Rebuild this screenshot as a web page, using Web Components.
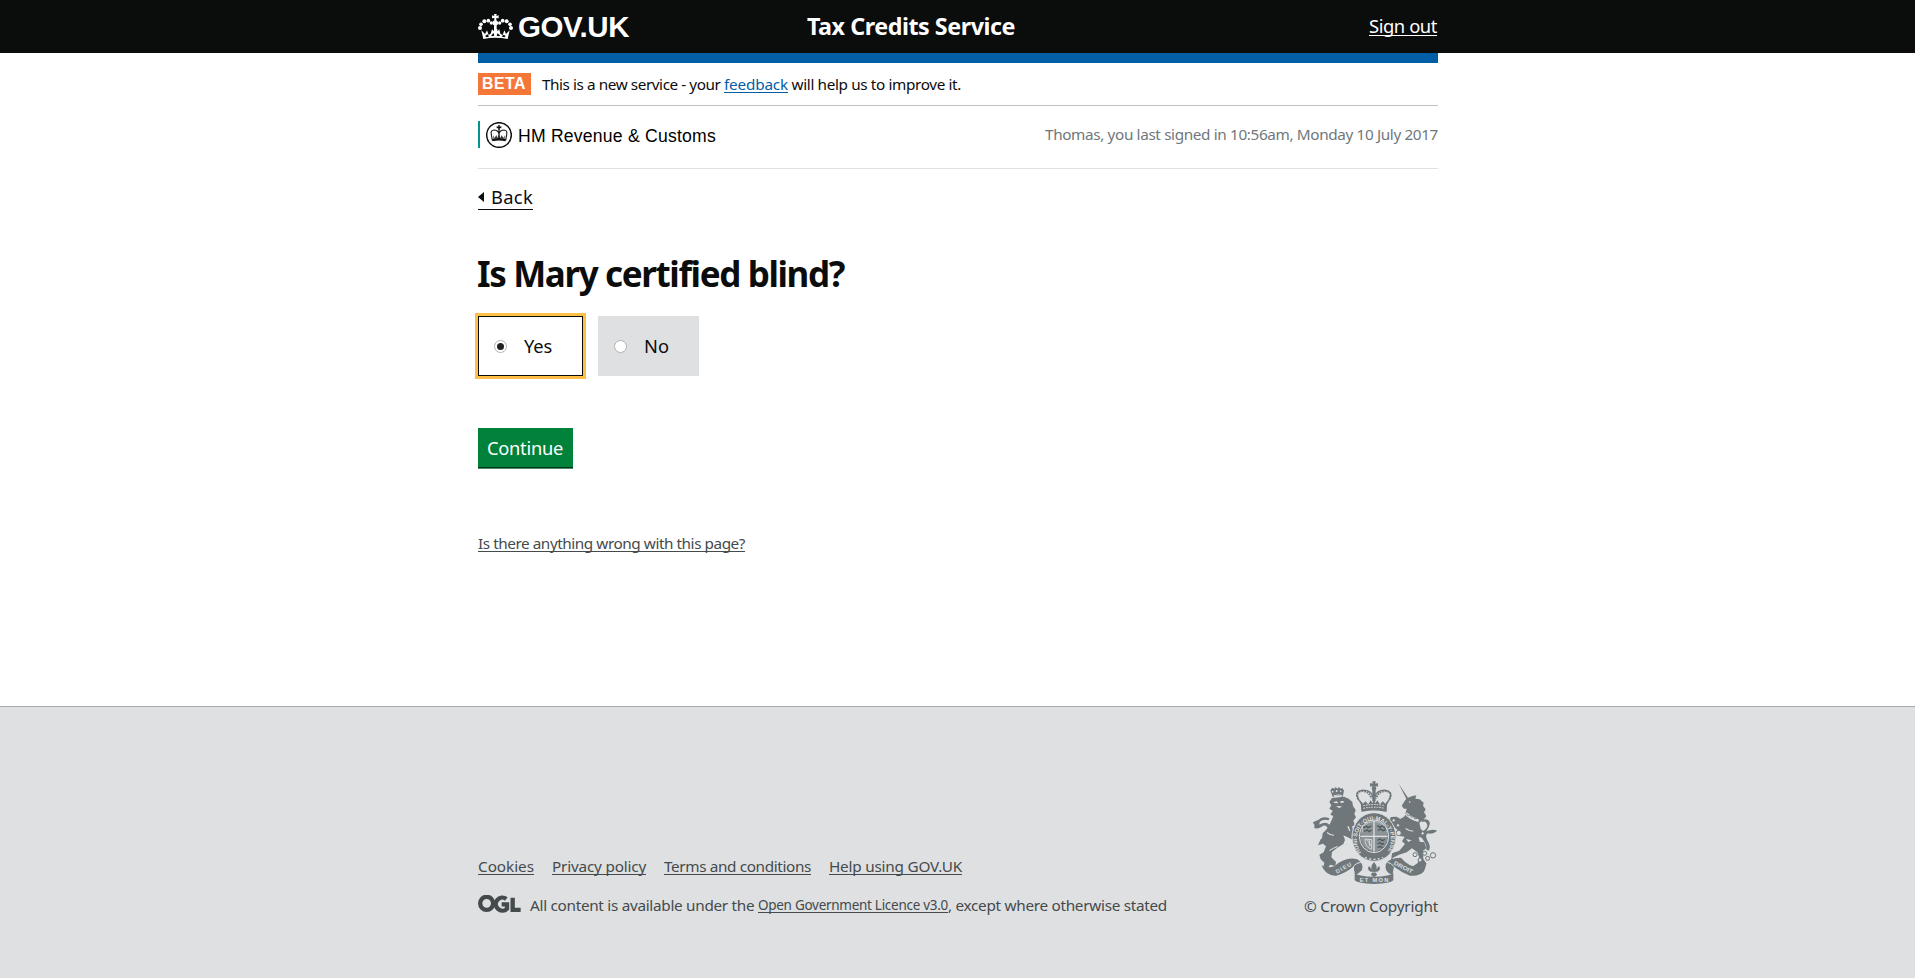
<!DOCTYPE html>
<html lang="en">
<head>
<meta charset="utf-8">
<title>Is Mary certified blind? - Tax Credits Service</title>
<style>
html,body{margin:0;padding:0}
body{background:#fff;color:#0b0c0c;font-family:"Noto Sans","Open Sans",sans-serif;font-size:15.3px;line-height:20px;overflow:hidden}
</style>
</head>
<body>
<tax-page></tax-page>
<script>
const define = (name, html, init) => customElements.define(name, class extends HTMLElement {
  connectedCallback() {
    if (this.shadowRoot) return;
    this.attachShadow({mode: "open"}).innerHTML = html;
    if (init) init(this);
  }
});

/* A run of text tracked so that it fills a set measure, given in "w". */
define("fit-text", `<style>
:host{display:inline-block;white-space:pre}
:host([u]) span{text-decoration:underline;text-decoration-thickness:1px;text-underline-offset:2px;text-decoration-skip-ink:none}
span{display:inline-block}
</style><span><slot></slot></span>`, el => {
  const s = el.shadowRoot.querySelector("span"), w = +el.getAttribute("w");
  const n = el.textContent.length;
  s.style.letterSpacing = ((w - s.getBoundingClientRect().width) / n) + "px";
  el.style.width = w + "px";
});

define("page-width", `<style>:host{display:block;width:960px;margin:0 auto;padding-left:1px}</style><slot></slot>`);

define("gov-crown", `<style>:host{display:block;width:35px;height:26px}svg{display:block}</style>
<svg width="35" height="26" viewBox="39 39 105 78" fill="#fff">
<path d="M49 88L55 114Q91 107 128 114L134 88L123 99L118 88L113 102L106 98L103 85L97 91L97 84H87V91L81 85L77 98L71 102L66 88L60 99Z"/>
<g fill="#0b0c0c"><path d="M61 104l7-4 4 7-9 2zM79 103l7-7 2 8-8 2zM97 97l8 6-2 3-8-2zM114 101l8 3-3 5-8-2z"/></g>
<circle cx="45" cy="81" r="6"/><circle cx="48" cy="70" r="5.5"/><circle cx="58" cy="61" r="6"/><circle cx="70" cy="59" r="5.5"/><circle cx="79" cy="66" r="5"/>
<circle cx="138" cy="81" r="6"/><circle cx="135" cy="70" r="5.5"/><circle cx="125" cy="61" r="6"/><circle cx="113" cy="59" r="5.5"/><circle cx="104" cy="66" r="5"/>
<circle cx="91" cy="66" r="8"/><path d="M87 39h8l-1 6 7-2v9l-7-1v13h-6V51l-7 1v-9l7 2z"/><path d="M87 73h8v14h-8z"/></svg>`);

define("site-header", `<style>
:host{display:block;height:53px;background:#0b0c0c;color:#fff}
.bar{display:grid;grid-template-columns:329px 1fr auto;align-items:center;height:53px}
.logo{display:flex;align-items:center;gap:5px}
.logo fit-text{font:700 29.5px/36px "Liberation Sans",Arial,sans-serif;padding-top:1px}
.title{font-size:23.3px;font-weight:700;line-height:30px;padding-bottom:2px}
.out{font-size:18.4px;line-height:24px;padding-right:1px;padding-bottom:1px}
</style><page-width><div class="bar"><div class="logo"><gov-crown></gov-crown><fit-text w="111">GOV.UK</fit-text></div>
<fit-text class="title" w="208">Tax Credits Service</fit-text><fit-text class="out" u w="68">Sign out</fit-text></div></page-width>`);

define("phase-banner", `<style>
:host{display:flex;align-items:center;height:42px;border-top:10px solid #005ea5;border-bottom:1px solid #bfc1c3}
.tag{background:#f47738;color:#fff;font:700 15.8px/22px "Liberation Sans",Arial,sans-serif;width:49px;padding-left:4px;margin-right:11px}
.link{color:#005ea5}
</style><div class="tag"><fit-text w="44">BETA</fit-text></div><fit-text w="182">This is a new service - your </fit-text><fit-text class="link" u w="64">feedback</fit-text><fit-text w="173"> will help us to improve it.</fit-text>`);

define("hmrc-logo", `<style>
:host{display:flex;align-items:center;border-left:2px solid #009390;height:27px;padding-left:6px;gap:6px;color:#000}
svg{display:block}fit-text{font:17.6px/22px "Liberation Sans",Arial,sans-serif;padding-top:2px}
</style><svg width="26" height="26" viewBox="63 66 78 78">
<circle cx="102" cy="105" r="37" fill="#fff" stroke="#111" stroke-width="4.5"/>
<g fill="none" stroke="#222" stroke-width="3.5"><path d="M82 121L79 104Q76 91 87 90Q99 90 102 102Q105 90 117 90Q128 91 125 104L122 121M102 82V118"/></g>
<path d="M82 124V117Q102 111 122 117V124Q102 119 82 124ZM99 76h6l-1 4 5-1v6l-5-1v5h-4v-5l-5 1v-6l5 1z" fill="#111"/>
<path d="M84 106l5 8 5-9 3 9 5-12 5 12 3-9 5 9 5-8-2 11Q102 111 86 117Z" fill="#333"/></svg><fit-text w="198">HM Revenue &amp; Customs</fit-text>`);

define("account-bar", `<style>
:host{display:flex;justify-content:space-between;align-items:center;height:57px;padding-bottom:5px;border-bottom:1px solid #dee0e2;color:#6f777b}
.who{padding-bottom:2px}
</style><hmrc-logo></hmrc-logo><fit-text class="who" w="393">Thomas, you last signed in 10:56am, Monday 10 July 2017</fit-text>`);

define("back-link", `<style>
:host{display:flex;width:55px;height:22px;align-items:center;gap:7px;margin-top:18px;border-bottom:1px solid #0b0c0c;font-size:18.3px;line-height:22px}
i{border:5px solid transparent;border-left:0;border-right:6px solid #0b0c0c;margin-bottom:2px}
fit-text{padding-bottom:2px}
</style><i></i><fit-text w="42">Back</fit-text>`);

define("block-radio", `<style>
:host{display:flex;align-items:center;box-sizing:border-box;height:60px;width:101px;background:#dee0e2;padding-left:16px;gap:17px;font-size:18.3px;line-height:24px}
:host([checked]){width:105px;background:#fff;border:1px solid #0b0c0c;outline:3px solid #ffbf47;padding-left:15px}
i{width:11px;height:11px;border:1px solid #b2b2b2;border-radius:50%;background:#fff;display:flex;align-items:center;justify-content:center}
:host([checked]) i::after{content:"";width:7px;height:7px;border-radius:50%;background:#222}
slot{display:block}
</style><i></i><slot></slot>`);

define("question-form", `<style>
:host{display:block}
h1{margin:43px 0 22px -1px;font-size:35px;line-height:41px;height:41px;font-weight:700}
.opts{display:flex;gap:15px}
button{display:block;appearance:none;border:0;margin:52px 0 66px;padding:1px 0 0 9px;width:95px;height:39px;background:#00823b;color:#fff;font:18.3px/38px "Noto Sans",sans-serif;text-align:left;box-shadow:0 1px 0 #003618,0 2px 0 #4d8a65}
.help{color:#454a4c;display:block}
</style><h1><fit-text w="367">Is Mary certified blind?</fit-text></h1>
<div class="opts"><block-radio checked><fit-text w="28">Yes</fit-text></block-radio><block-radio><fit-text w="25">No</fit-text></block-radio></div>
<button><fit-text w="76">Continue</fit-text></button><fit-text class="help" u w="267">Is there anything wrong with this page?</fit-text>`);

define("royal-arms", `<style>:host{display:block;width:125px;height:104px}svg{display:block}text{font:700 17px "Liberation Sans",Arial,sans-serif;fill:#dee0e2}</style>
<svg width="125" height="104" viewBox="69 33 375 312" fill="#6f777b">
<g id="lion"><path d="M126 84L162 80L176 86L187 96L189 108L197 120L193 132L198 142L190 152L194 164L186 170L190 181L203 192L208 203L198 206L203 214L192 217L184 207L170 200L160 196L165 210L160 222L142 233L126 246L124 262L138 276L136 288L120 284L116 292L100 290L103 278L92 268L88 254L101 247L108 229L100 222L96 204L98 190L108 180L116 170L124 152L130 138L121 134L128 122L118 116L124 106L118 96Z"/>
<path d="M99 221L84 226L92 208Q116 192 114 176Q108 161 95 170Q77 180 72 172Q77 166 68 157L86 149Q99 137 118 145L116 151Q100 146 89 156L88 164Q106 153 119 164Q128 183 112 204Z"/>
<path d="M121 61l7-8 5 3 4-5 5 5 5-5 4 5 6-2 5 8-4 18Q142 74 128 81Z"/><g fill="#dee0e2"><circle cx="128" cy="65" r="2.5"/><circle cx="140" cy="63" r="3"/><circle cx="152" cy="64" r="2.5"/><path d="M130 96l11-2 4 6-12-1zM150 94l10-1 3 4-10 3zM138 108l18 1-8 6zM131 76q14-5 25-1v3q-14-3-25 1zM176 168l5 14-3 2-6-14zM118 240q13-8 24-12l1 3q-13 4-24 12zM112 186q8 8 20 8v3q-14 0-22-8z"/></g></g>
<g id="unicorn"><path d="M326 41L354 83L365 79L379 76L376 86L389 88L401 98L399 107L407 118L402 127L409 138L401 149L388 158L392 176L405 190L400 204L386 201L389 215L403 217L409 235L399 242L400 267L410 281L403 290L390 295L367 290L383 279L388 264L382 247L366 235L350 247L327 254L309 263L303 273L306 250L328 242L345 222L336 214L344 200L329 198L323 181L307 165L299 153L302 141L320 140L331 147L344 139L350 116L342 116L335 107L344 93L349 86Z"/>
<path d="M401 212Q387 194 398 184Q413 175 412 165Q407 150 396 157L397 150Q413 144 419 157Q421 167 409 184Q426 176 442 182Q428 194 414 190Q403 195 413 213Q423 227 417 242L409 239Q411 225 401 212Z"/>
<g fill="#dee0e2"><circle cx="359" cy="96" r="2.5"/><path d="M349 127q14 12 38 22l-2 7q-26-8-40-22z"/><path d="M348 174q10 8 22 8l-1 3q-14-1-23-8zM348 207l17 4-10 5z"/></g>
<g fill="#dee0e2" stroke="#6f777b" stroke-width="3"><circle cx="375" cy="254" r="6"/><circle cx="390" cy="270" r="6"/><circle cx="404" cy="250" r="6"/><circle cx="413" cy="265" r="6"/><circle cx="429" cy="256" r="8"/><circle cx="398" cy="190" r="5"/><circle cx="326" cy="189" r="8"/><circle cx="311" cy="151" r="5"/><circle cx="324" cy="166" r="5"/></g>
<path d="M349 130l5 8 6-4 4 8 7-3 3 8 7-2" fill="none" stroke="#6f777b" stroke-width="2.5"/></g>
<g id="crown"><path d="M215 102L208 92Q190 66 215 61Q242 59 249 80H254Q262 59 287 61Q312 66 296 92L289 102L288 123Q251 116 216 123Z" fill="none" stroke="#6f777b" stroke-width="4"/>
<path d="M205 88Q195 65 217 63Q238 64 245 86M298 88Q309 65 286 63Q265 64 258 86" fill="none" stroke="#6f777b" stroke-width="6" stroke-dasharray="5 3"/>
<path d="M216 123L210 91L219 101L226 94L235 103L242 91L248 100L251 85L256 100L262 91L270 103L278 94L286 101L294 91L288 123Q251 116 216 123Z"/><path d="M247 34h10l-1 7 8-2v11l-8-2 3 7-2 6h-10l-2-6 3-7-8 2V39l8 2zM247 61h10v33h-10z"/>
<path d="M220 107q32-7 64 0M220 115q32-7 64 0" stroke="#dee0e2" stroke-width="3" fill="none" stroke-dasharray="5 3"/></g>
<g id="shield"><ellipse cx="252" cy="201" rx="66" ry="73" stroke="#dee0e2" stroke-width="3"/><ellipse cx="252" cy="199" rx="44" ry="49" fill="none" stroke="#dee0e2" stroke-width="3"/><ellipse cx="252" cy="199" rx="40" ry="45" fill="#8b9396"/>
<path d="M252 153v92M211 199h82" stroke="#dee0e2" stroke-width="4"/>
<path d="M220 174l9-6 5 5 10-5M222 184l10-4 5 5 8-5M262 167l8 5 7-5 8 7M264 181l8-4 7 5 8-3M262 211l8-4 7 5 8-4M262 222l8-4 7 5 5-3M263 233l7-4 7 4" stroke="#4f585c" stroke-width="4" fill="none"/>
<path d="M225 207q0 25 20 31M225 207l20 2v28M231 209l14 20M238 210v19" stroke="#dee0e2" stroke-width="2.5" fill="none"/>
<path d="M217 165v22M291 165v22M221 168q31-28 62 0" stroke="#dee0e2" stroke-width="2" fill="none"/>
<path id="garter" d="M214 247A51 58 0 1 1 290 247" fill="none"/><text style="font-size:17px"><textPath href="#garter" textLength="249">HONI·SOIT·QUI·MAL·Y·PENSE</textPath></text>
<path d="M225 262q27 12 54 0" stroke="#dee0e2" stroke-width="4" stroke-dasharray="6 7" fill="none"/></g>
<g id="motto"><path d="M94 286Q111 297 134 288Q168 258 202 268Q222 280 216 300Q207 311 196 315L192 300L192 288Q169 309 139 317Q109 319 94 286Z"/><path d="M307 315Q283 306 287 284Q295 263 333 263Q356 292 393 293L409 284L402 304Q389 320 360 317Q336 308 312 290Z"/>
<path d="M191 288Q200 278 212 277M312 290Q304 278 292 277" stroke="#dee0e2" stroke-width="3" fill="none"/><path d="M194 308Q203 319 252 320Q301 319 310 308V331Q301 341 252 342Q203 341 194 331Z"/>
<text transform="translate(141 311) rotate(-29)" textLength="51">DIEU</text><text transform="translate(310 283) rotate(27)" textLength="62" lengthAdjust="spacingAndGlyphs">DROIT</text>
<text x="209" y="337" textLength="86" style="font-size:17px">ET MON</text></g>
<path d="M252 276Q266 292 255 301Q262 294 267 288Q275 299 262 305H257L261 315L252 322L243 315L247 305H242Q229 299 237 288Q242 294 249 301Q238 292 252 276Z"/><path d="M243 307h18" stroke="#dee0e2" stroke-width="2"/>
</svg>`);

define("ogl-logo", `<style>:host{display:block;width:43px;height:18px}svg{display:block}</style>
<svg width="43" height="18" viewBox="0 0 129 54" fill="none" stroke="#454a4c" stroke-width="13"><circle cx="26" cy="25" r="19.5"/><path d="M85 12A19.5 19.5 0 1 0 87 41V28H71"/><path d="M104 8V44.500H128"/></svg>`);

define("site-footer", `<style>
:host{display:block;box-sizing:border-box;height:272px;background:#dee0e2;border-top:1px solid #a1acb2;color:#454a4c}
.in{display:flex;justify-content:space-between;align-items:flex-end;padding-top:74px}
.links{display:flex;margin-bottom:19px}.links>*{margin-right:18px}
.lic{display:flex;margin-bottom:1px}ogl-logo{margin-right:9px}
.small{font-size:13.5px}
.right{display:flex;flex-direction:column;align-items:flex-end;gap:11px}
</style><page-width><div class="in"><div><div class="links"><fit-text u w="56">Cookies</fit-text><fit-text u w="94">Privacy policy</fit-text><fit-text u w="147">Terms and conditions</fit-text><fit-text u w="133">Help using GOV.UK</fit-text></div>
<div class="lic"><ogl-logo></ogl-logo><fit-text w="228">All content is available under the </fit-text><fit-text class="small" u w="190">Open Government Licence v3.0</fit-text><fit-text w="219">, except where otherwise stated</fit-text></div></div>
<div class="right"><royal-arms></royal-arms><fit-text w="134">© Crown Copyright</fit-text></div></div></page-width>`);

define("tax-page", `<style>
:host{display:flex;flex-direction:column;height:978px}main{flex:1}
</style><site-header></site-header><main><page-width><phase-banner></phase-banner><account-bar></account-bar><back-link></back-link><question-form></question-form></page-width></main><site-footer></site-footer>`);
</script>
</body>
</html>
